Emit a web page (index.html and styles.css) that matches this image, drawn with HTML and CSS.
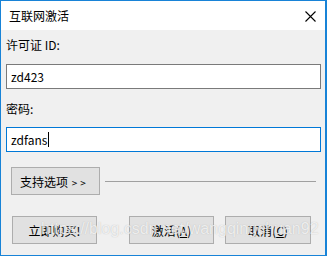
FILE: index.html
```html
<!DOCTYPE html>
<html lang="zh-CN">
<head>
    <meta charset="UTF-8">
    <title>互联网激活</title>
    <link rel="stylesheet" href="styles.css">
</head>
<body>
    <div class="dialog">
        <div class="title-bar">
            <span class="title">互联网激活</span>
            <svg class="close" width="11" height="11" viewBox="0 0 11 11">
                <path d="M0.5 0.5 L10.5 10.5 M10.5 0.5 L0.5 10.5" stroke="#000" stroke-width="1.1" fill="none"/>
            </svg>
        </div>
        <div class="content">
            <label class="field-label" for="license">许可证 ID:</label>
            <input class="field" type="text" id="license" value="zd423">
            <label class="field-label second" for="password">密码:</label>
            <div class="field active">zdfans<span class="caret"></span></div>

            <div class="options-row">
                <button class="btn options-btn">支持选项 <span class="arrows">&gt;&gt;</span></button>
                <div class="divider"></div>
            </div>

            <div class="actions">
                <button class="btn buy">立即购买!</button>
                <button class="btn activate">激活(<u>A</u>)</button>
                <button class="btn cancel">取消(<u>C</u>)</button>
                <span class="watermark">https://blog.csdn.net/wangqingchuan92</span>
            </div>
        </div>
    </div>
</body>
</html>
```

FILE: styles.css
```css
html, body {
    margin: 0;
    padding: 0;
    background: #fff;
}
body {
    font-family: "Noto Sans CJK SC", "Noto Sans", sans-serif;
    font-size: 12px;
    color: #000;
}
.dialog {
    width: 327px;
    height: 256px;
    box-sizing: border-box;
    border: 1px solid #1883d7;
    border-right-width: 2px;
    display: flex;
    flex-direction: column;
    overflow: hidden;
}
.title-bar {
    height: 29px;
    background: #fff;
    display: flex;
    align-items: center;
    justify-content: space-between;
    padding: 0 9px 0 8px;
}
.title {
    font-size: 12px;
    line-height: 16px;
}
.close {
    display: block;
    margin-top: 1px;
}
.content {
    flex: 1;
    background: #f0f0f0;
    padding: 7px 4px 0 5px;
    display: flex;
    flex-direction: column;
}
.field-label {
    display: block;
    line-height: 16px;
    height: 16px;
}
.field-label.second {
    margin-top: 12px;
}
.field {
    box-sizing: border-box;
    height: 25px;
    width: 315px;
    margin: 11px 0 0;
    padding: 0 4px;
    border: 1px solid #7a7a7a;
    background: #fff;
    font-family: inherit;
    font-size: 12px;
    color: #000;
    outline: none;
    line-height: 23px;
}
.field.active {
    border-color: #0078d7;
    margin-top: 10px;
    display: flex;
    align-items: center;
}
.caret {
    display: inline-block;
    width: 1px;
    height: 15px;
    background: #000;
    margin-left: 1px;
}
.btn {
    box-sizing: border-box;
    height: 28px;
    background: #e1e1e1;
    border: 1px solid #adadad;
    font-family: inherit;
    font-size: 12px;
    color: #000;
    padding: 0;
    cursor: default;
}
.options-row {
    display: flex;
    align-items: center;
    margin-top: 15px;
    padding-left: 5px;
}
.options-btn {
    width: 89px;
    text-align: left;
    padding-left: 8px;
}
.arrows {
    font-size: 10px;
    letter-spacing: 3px;
    margin-left: 1px;
}
.divider {
    width: 211px;
    height: 1px;
    background: #a0a0a0;
    margin-left: 5px;
}
.actions {
    position: relative;
    display: flex;
    margin-top: 21px;
    padding-left: 6px;
}
.buy {
    width: 85px;
}
.activate {
    width: 85px;
    margin-left: 32px;
}
.cancel {
    width: 86px;
    margin-left: 11px;
}
.watermark {
    position: absolute;
    left: 35px;
    top: 4px;
    font-family: "Liberation Sans", Arial, sans-serif;
    font-size: 16px;
    color: rgba(255, 255, 255, 0.75);
    text-shadow: 0 0 1px rgba(140, 140, 140, 0.55);
    white-space: nowrap;
    pointer-events: none;
}
```
